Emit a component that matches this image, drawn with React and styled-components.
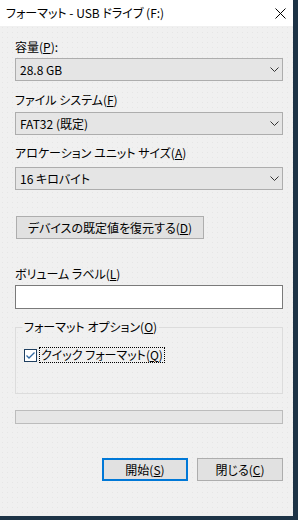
import React from "react";
import styled, { createGlobalStyle } from "styled-components";

const GlobalStyle = createGlobalStyle`
  html, body {
    margin: 0;
    padding: 0;
    background: #1d3346;
  }
  body {
    font-family: "Noto Sans CJK JP", "Noto Sans", sans-serif;
    font-size: 12px;
    color: #000;
    font-feature-settings: "palt";
  }
`;

const Window = styled.div`
  width: 293px;
  height: 516px;
  background-color: #f0f0f0;
  background-image: radial-gradient(#e6e6e6 0.6px, transparent 0.8px);
  background-size: 5px 5px;
  display: flex;
  flex-direction: column;
`;

const TitleBar = styled.div`
  height: 26px;
  background: #fff;
  display: flex;
  align-items: center;
  justify-content: space-between;
  padding-left: 6px;
`;

const Title = styled.span`
  line-height: 16px;
`;

const CloseButton = styled.div`
  width: 26px;
  height: 26px;
  display: flex;
  align-items: center;
  justify-content: center;
`;

const Body = styled.div`
  display: flex;
  flex-direction: column;
  padding: 0 10px 0 15px;
`;

const Label = styled.div`
  line-height: 16px;
  margin-top: ${(p) => p.$top}px;
`;

const Select = styled.div`
  margin-top: ${(p) => p.$top}px;
  height: 23px;
  box-sizing: border-box;
  border: 1px solid #adadad;
  background: #e5e5e5;
  display: flex;
  align-items: center;
  justify-content: space-between;
  padding: 0 3px 0 4px;
  line-height: 16px;
`;

const Button = styled.div`
  width: ${(p) => p.$width}px;
  height: 23px;
  box-sizing: border-box;
  border: ${(p) => (p.$primary ? "2px solid #0078d7" : "1px solid #adadad")};
  background: #e1e1e1;
  display: flex;
  align-items: center;
  justify-content: center;
  line-height: 16px;
`;

const RestoreRow = styled.div`
  margin-top: 26px;
  padding-left: 1px;
`;

const TextInput = styled.div`
  margin-top: 3px;
  height: 24px;
  box-sizing: border-box;
  border: 1px solid #7a7a7a;
  background: #fff;
`;

const Group = styled.fieldset`
  margin: 10px 0 0;
  padding: 0 0 30px 6px;
  border: 1px solid #dcdcdc;
  min-width: 0;
`;

const Legend = styled.legend`
  padding: 0 2px;
  line-height: 16px;
`;

const CheckRow = styled.div`
  margin-top: 12px;
  margin-left: 2px;
  display: flex;
  align-items: center;
  gap: 2px;
`;

const CheckBox = styled.span`
  width: 13px;
  height: 13px;
  box-sizing: border-box;
  border: 1px solid #1f3f60;
  background: #fff;
  display: flex;
  align-items: center;
  justify-content: center;
`;

const FocusLabel = styled.span`
  border: 1px dotted #000;
  padding: 0 1px;
  line-height: 14px;
`;

const Progress = styled.div`
  margin-top: 16px;
  height: 14px;
  box-sizing: border-box;
  border: 1px solid #bcbcbc;
  background: #e6e6e6;
`;

const ButtonRow = styled.div`
  margin-top: 34px;
  display: flex;
  justify-content: flex-end;
  gap: 9px;
`;

const Chevron = () => (
  <svg width="9" height="5" viewBox="0 0 9 5">
    <path d="M0.5 0.5 L4.5 4.5 L8.5 0.5" fill="none" stroke="#333" strokeWidth="1" />
  </svg>
);

const ComboBox = ({ top, value }) => (
  <Select $top={top}>
    <span>{value}</span>
    <Chevron />
  </Select>
);

export default function App() {
  return (
    <>
      <GlobalStyle />
      <Window>
        <TitleBar>
          <Title>フォーマット - USB ドライブ (F:)</Title>
          <CloseButton>
            <svg width="11" height="11" viewBox="0 0 11 11">
              <path d="M0.5 0.5 L10.5 10.5 M10.5 0.5 L0.5 10.5" stroke="#000" strokeWidth="1" />
            </svg>
          </CloseButton>
        </TitleBar>
        <Body>
          <Label $top={13}>
            容量(<u>P</u>):
          </Label>
          <ComboBox top={3} value="28.8 GB" />
          <Label $top={11}>
            ファイル システム(<u>F</u>)
          </Label>
          <ComboBox top={4} value="FAT32 (既定)" />
          <Label $top={10}>
            アロケーション ユニット サイズ(<u>A</u>)
          </Label>
          <ComboBox top={6} value="16 キロバイト" />
          <RestoreRow>
            <Button $width={188}>
              デバイスの既定値を復元する(<u>D</u>)
            </Button>
          </RestoreRow>
          <Label $top={27}>
            ボリューム ラベル(<u>L</u>)
          </Label>
          <TextInput />
          <Group>
            <Legend>
              フォーマット オプション(<u>O</u>)
            </Legend>
            <CheckRow>
              <CheckBox>
                <svg width="11" height="11" viewBox="0 0 11 11">
                  <path d="M1.5 5.5 L4 8 L9.5 2.5" fill="none" stroke="#2f67a0" strokeWidth="1.3" />
                </svg>
              </CheckBox>
              <FocusLabel>
                クイック フォーマット(<u>Q</u>)
              </FocusLabel>
            </CheckRow>
          </Group>
          <Progress />
          <ButtonRow>
            <Button $width={86} $primary>
              開始(<u>S</u>)
            </Button>
            <Button $width={86}>
              閉じる(<u>C</u>)
            </Button>
          </ButtonRow>
        </Body>
      </Window>
    </>
  );
}
